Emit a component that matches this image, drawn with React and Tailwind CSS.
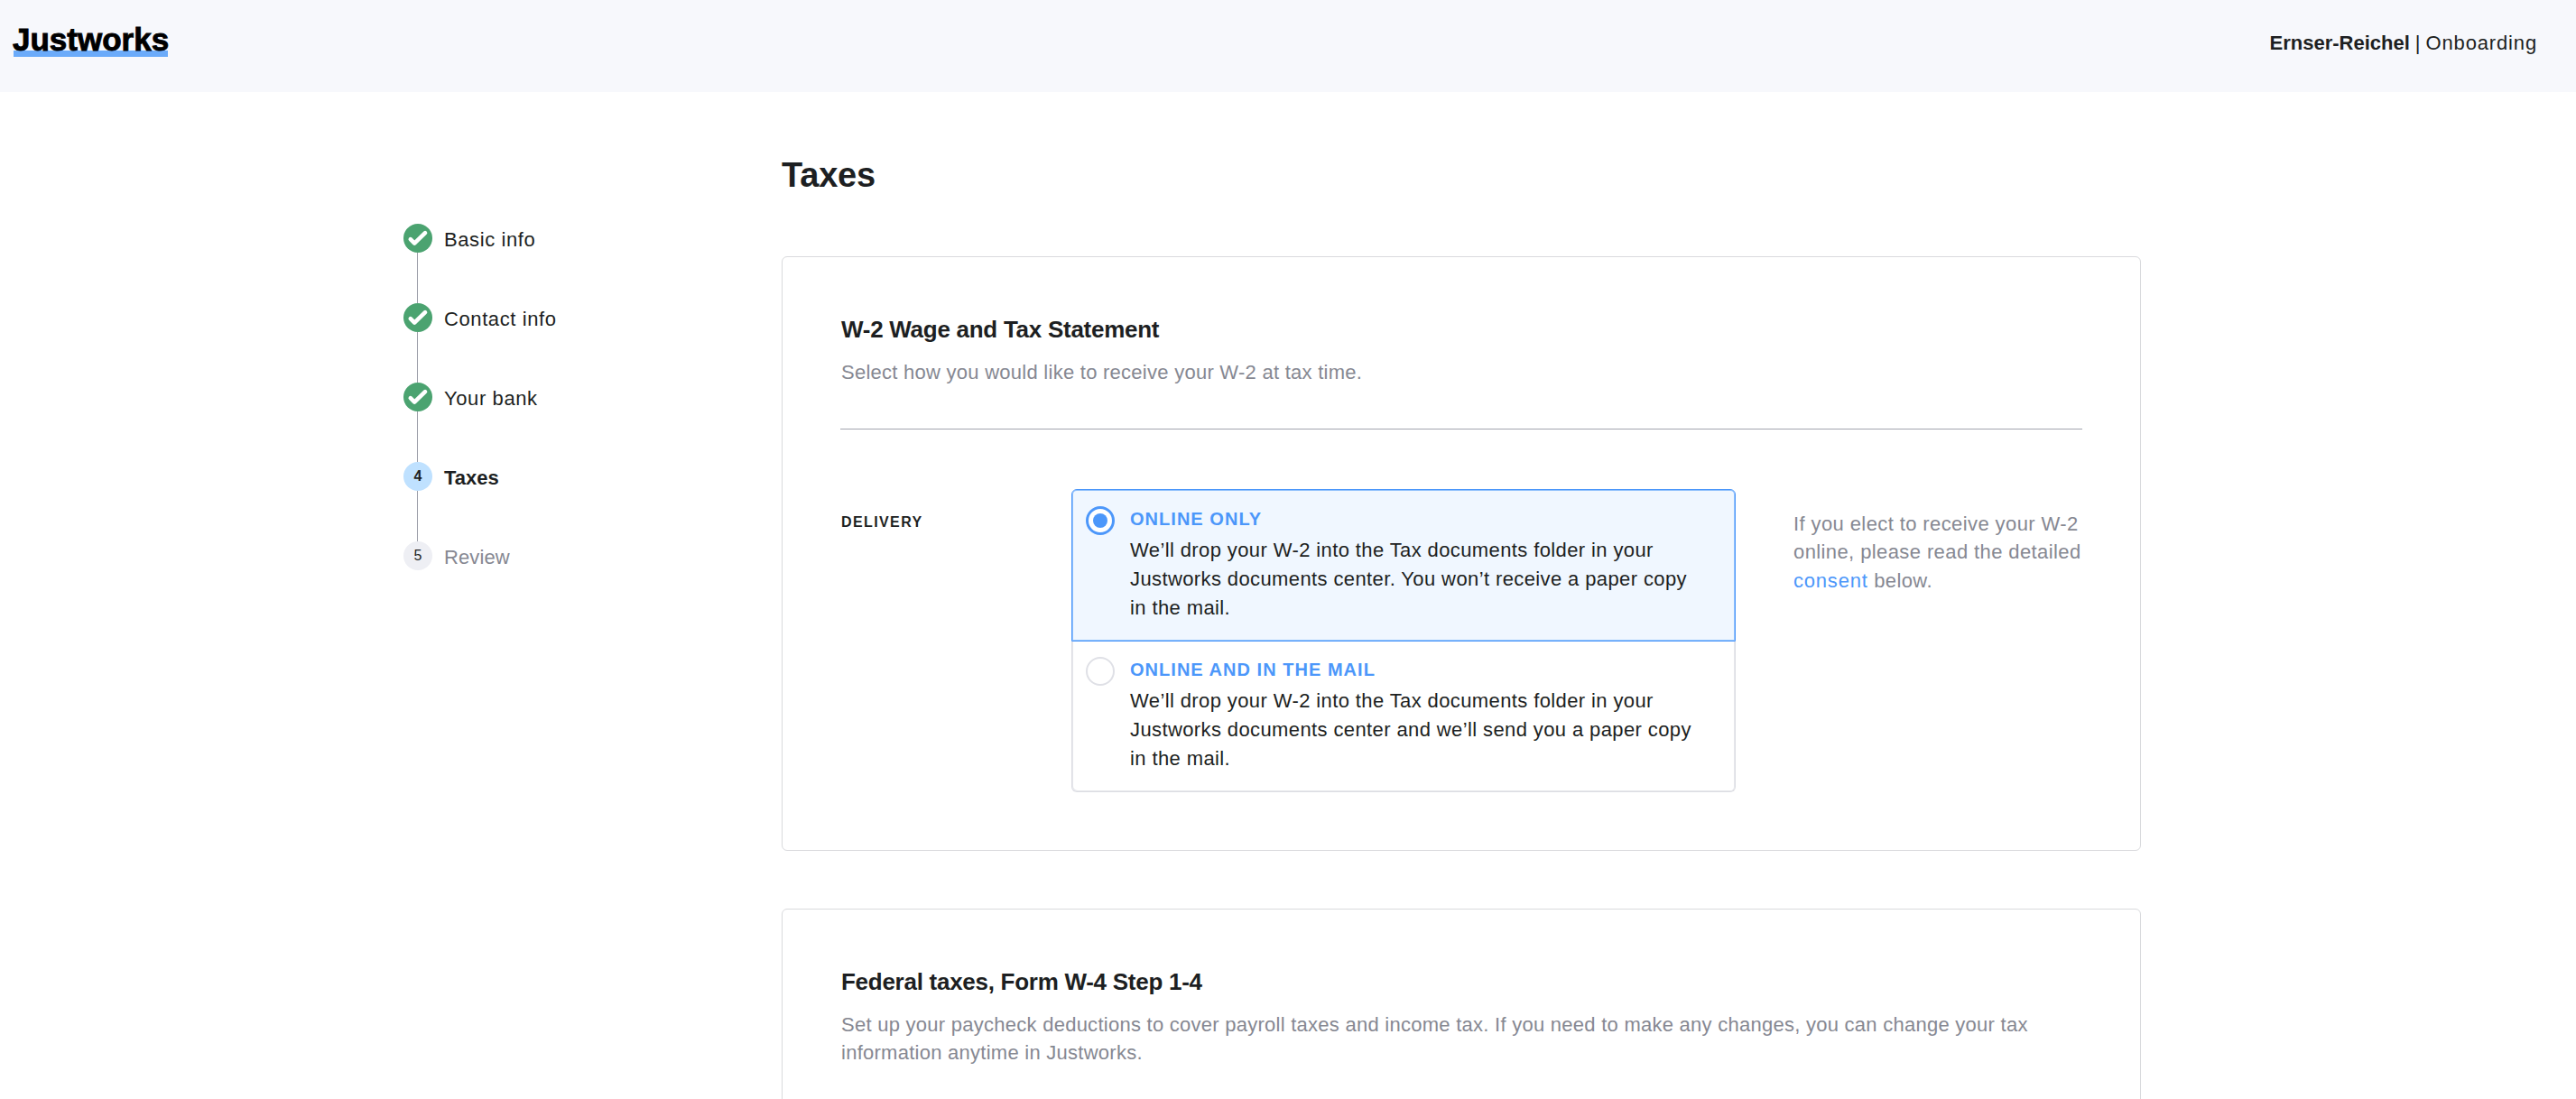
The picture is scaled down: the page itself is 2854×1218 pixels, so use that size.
import React, { useState } from 'react';

const steps = [
  { id: 1, label: 'Basic info', status: 'done' },
  { id: 2, label: 'Contact info', status: 'done' },
  { id: 3, label: 'Your bank', status: 'done' },
  { id: 4, label: 'Taxes', status: 'current' },
  { id: 5, label: 'Review', status: 'todo' },
];

const options = [
  {
    id: 'online',
    title: 'ONLINE ONLY',
    lines: [
      'We’ll drop your W-2 into the Tax documents folder in your',
      'Justworks documents center. You won’t receive a paper copy',
      'in the mail.',
    ],
  },
  {
    id: 'mail',
    title: 'ONLINE AND IN THE MAIL',
    lines: [
      'We’ll drop your W-2 into the Tax documents folder in your',
      'Justworks documents center and we’ll send you a paper copy',
      'in the mail.',
    ],
  },
];

function Header() {
  return (
    <header className="flex h-[102px] items-start justify-between bg-[#f7f8fc] pl-[15px] pr-[43px]">
      <div className="mt-6 h-[39px] w-[171px] border-b-[7px] border-[#6babfa]">
        <span className="relative block -ml-px whitespace-nowrap text-[35px] leading-[39px] font-bold text-black [-webkit-text-stroke:0.9px_black]">Justworks</span>
      </div>
      <div className="mt-8 flex items-start text-[22px] leading-8">
        <span className="font-bold">Ernser-Reichel</span>
        <span className="mx-[6px]">|</span>
        <span className="tracking-[0.85px]">Onboarding</span>
      </div>
    </header>
  );
}

function StepIcon({ step }) {
  if (step.status === 'done') {
    return (
      <svg className="size-8" viewBox="0 0 32 32" fill="none">
        <circle cx="16" cy="16" r="16" fill="#4ba370" />
        <path d="M7.8 17.2 12.2 21.6 24 10.2" stroke="#fff" strokeWidth="4.6" strokeLinecap="round" strokeLinejoin="round" />
      </svg>
    );
  }
  if (step.status === 'current') {
    return <div className="size-8 rounded-full bg-[#bfe1ff] text-center text-base leading-[31px] font-bold">{step.id}</div>;
  }
  return <div className="size-8 rounded-full bg-[#eeeff4] text-center text-base leading-[31px]">{step.id}</div>;
}

function Steps() {
  return (
    <nav className="ml-[447px] mt-[146px] w-[419px]">
      {steps.map((step, i) => (
        <div key={step.id} className="flex h-[88px] gap-[13px]">
          <div className="flex w-8 flex-col">
            <StepIcon step={step} />
            {i < steps.length - 1 && <div className="ml-[15px] w-px grow bg-[#9b9da8]" />}
          </div>
          <span
            className={
              step.status === 'current'
                ? 'mt-0.5 text-[22px] leading-8 font-bold'
                : step.status === 'todo'
                  ? 'mt-0.5 text-[22px] leading-8 tracking-[0.1px] text-[#868892]'
                  : 'mt-0.5 text-[22px] leading-8 tracking-[0.6px]'
            }
          >
            {step.label}
          </span>
        </div>
      ))}
    </nav>
  );
}

function Radio({ checked }) {
  if (!checked) {
    return <span className="size-8 shrink-0 rounded-full border-2 border-[#dfe0e6] bg-white" />;
  }
  return (
    <span className="flex size-8 shrink-0 items-center justify-center rounded-full border-[3px] border-[#4c97fa] bg-white">
      <span className="size-4 rounded-full bg-[#4c97fa]" />
    </span>
  );
}

function Option({ option, checked, onSelect }) {
  return (
    <button
      type="button"
      onClick={onSelect}
      className={
        checked
          ? 'flex h-[169px] w-full items-start rounded-t-[6px] border border-[#4c97fa] bg-[#f0f7ff] pt-[18px] pl-[15px] text-left shadow-[inset_0_0_0_1px_#8fc0fc]'
          : 'flex h-[167px] w-full items-start rounded-b-[6px] border border-t-0 border-[#dcdde3] bg-white pt-[17px] pl-[15px] text-left shadow-[inset_1px_-1px_0_#e6e7eb,inset_-1px_0_0_#e6e7eb]'
      }
    >
      <Radio checked={checked} />
      <span className="ml-[17px] block">
        <span className="block text-xl leading-7 font-bold tracking-[1.03px] text-[#4c97fa]">{option.title}</span>
        <span className="mt-[5px] block text-[22px] leading-8 tracking-[0.39px]">
          {option.lines.map((line) => (
            <span key={line} className="block whitespace-nowrap">{line}</span>
          ))}
        </span>
      </span>
    </button>
  );
}

function Card({ title, description, children }) {
  return (
    <section className="rounded-[6px] border border-[#d9dadd] p-16">
      <h2 className="pl-px text-[26px] leading-8 font-bold tracking-[-0.27px]">{title}</h2>
      <p className="mt-4 pl-px text-[22px] leading-[31px] tracking-[0.26px] text-[#868892]">{description}</p>
      {children}
    </section>
  );
}

export default function App() {
  const [delivery, setDelivery] = useState('online');

  return (
    <div className="h-[1218px] overflow-hidden bg-white font-['Liberation_Sans',Arial,sans-serif] text-[#1d1f22]">
      <Header />
      <div className="flex items-start">
        <Steps />
        <main className="mt-[68px] w-[1506px]">
          <h1 className="mb-[66px] text-[38px] leading-[48px] font-bold tracking-[-0.2px]">Taxes</h1>

          <Card title="W-2 Wage and Tax Statement" description="Select how you would like to receive your W-2 at tax time.">
            <div className="mt-[47px] h-px bg-[#a2a4ae]" />
            <div className="mt-[66px] flex items-start">
              <div className="mt-[25px] w-64 pl-px text-base leading-6 font-bold tracking-[1.4px]">DELIVERY</div>
              <div className="w-[736px]">
                {options.map((option) => (
                  <Option key={option.id} option={option} checked={delivery === option.id} onSelect={() => setDelivery(option.id)} />
                ))}
              </div>
              <p className="mt-[23px] ml-16 whitespace-nowrap text-[22px] leading-[31.4px] tracking-[0.4px] text-[#868892]">
                If you elect to receive your W-2<br />
                online, please read the detailed<br />
                <a href="#consent" className="tracking-[0.8px] text-[#4c97fa]">consent</a> below.
              </p>
            </div>
          </Card>

          <div className="mt-16">
            <Card
              title="Federal taxes, Form W-4 Step 1-4"
              description="Set up your paycheck deductions to cover payroll taxes and income tax. If you need to make any changes, you can change your tax information anytime in Justworks."
            />
          </div>
        </main>
      </div>
    </div>
  );
}
